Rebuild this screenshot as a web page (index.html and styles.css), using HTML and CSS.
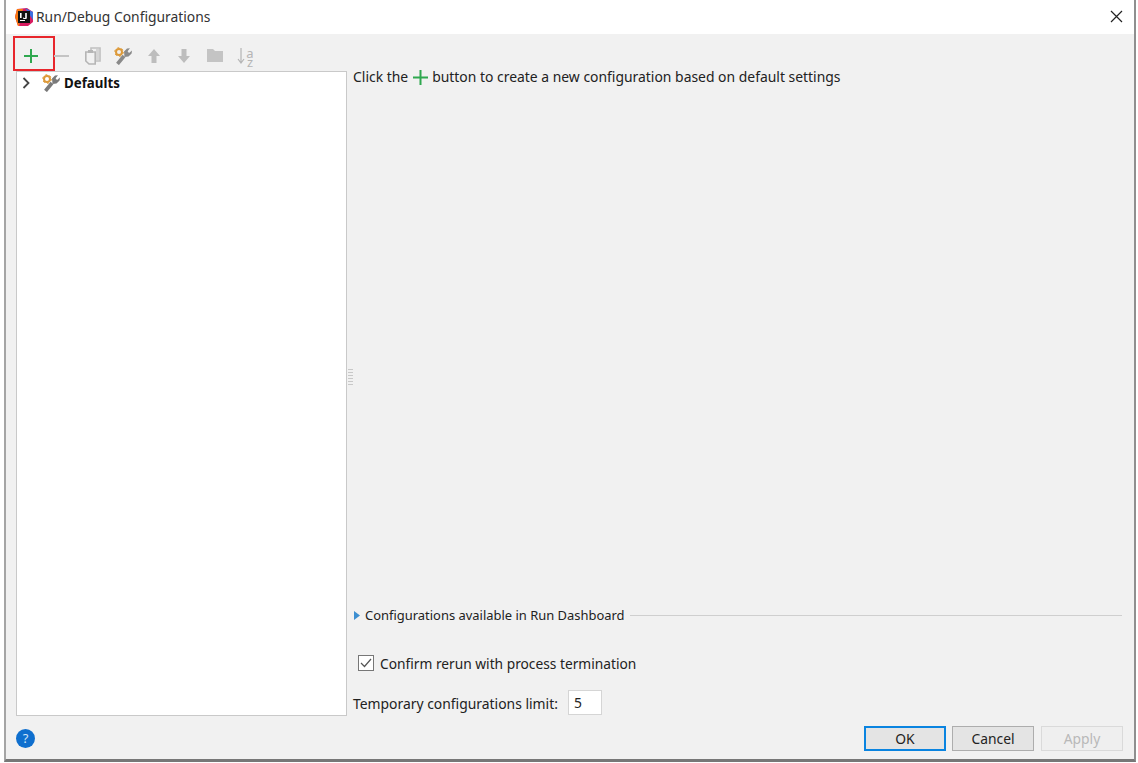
FILE: index.html
```html
<!DOCTYPE html>
<html lang="en">
<head>
<meta charset="utf-8">
<title>Run/Debug Configurations</title>
<link rel="stylesheet" href="styles.css">
</head>
<body>
<div class="window">
  <header class="titlebar">
    <svg class="app-icon" width="18" height="18" viewBox="0 0 18 18">
      <path d="M2 1 L12 0 L18 4 L18 14 L13 18 L3 18 L0 9 Z" fill="#d81b60"/>
      <path d="M0 9 L2 1 L8 1 L4 18 L3 18 Z" fill="#f97a12"/>
      <path d="M10 0 L18 4 L18 12 Z" fill="#3d6fe0"/>
      <rect x="3" y="3" width="12" height="12" fill="#111"/>
      <rect x="5" y="12" width="5" height="1" fill="#fff"/>
      <rect x="5" y="5" width="1.6" height="5" fill="#fff"/>
      <path d="M8 9.2L9 10H10.2V5H11.8V10.5L10.8 11H8.8L8 10.5Z" fill="#fff"/>
    </svg>
    <span class="title">Run/Debug Configurations</span>
    <svg class="close" width="13" height="13" viewBox="0 0 13 13"><path d="M1 1L12 12M12 1L1 12" stroke="#222" stroke-width="1.2" fill="none"/></svg>
  </header>
  <div class="content">
    <div class="left">
      <div class="toolbar">
        <div class="add-box">
          <svg width="16" height="16" viewBox="0 0 16 16"><path d="M8 1V15M1 8H15" stroke="#2fa84f" stroke-width="2" fill="none"/></svg>
        </div>
        <svg class="tool tool-minus" width="15" height="16" viewBox="0 0 15 16"><path d="M0 8H15" stroke="#c4c4c4" stroke-width="2" fill="none"/></svg>
        <svg class="tool tool-copy" width="17" height="18" viewBox="0 0 17 18"><path d="M7 3V1H16V14H12" fill="none" stroke="#c0c0c0" stroke-width="1.6"/><path d="M1.8 5H11.2V17H5L1.8 14Z" fill="#f1f1f1" stroke="#b5b5b5" stroke-width="1.6"/><rect x="4" y="3" width="5" height="3" fill="#b5b5b5"/><path d="M12 2H15V13H12Z" fill="#d5d5d5"/></svg>
        <svg class="tool tool-wrench" width="19" height="18" viewBox="0 0 19 18"><circle cx="5" cy="5" r="3" fill="none" stroke="#dd9a3a" stroke-width="2"/><circle cx="5" cy="5" r="4.3" fill="none" stroke="#dd9a3a" stroke-width="1" stroke-dasharray="2 2.5"/><path d="M3.5 17L10 9" stroke="#8a8a8a" stroke-width="3.6" fill="none"/><path d="M10 4.5L13 1.5L16 1.2L13.6 4.2L15 6L18 3.6L17.6 6.6L14.5 9.6L10.5 10Z" fill="#8a8a8a"/></svg>
        <svg class="tool tool-up" width="14" height="16" viewBox="0 0 14 16"><path d="M7 1L13 8H9.5V15H4.5V8H1Z" fill="#bdbdbd"/></svg>
        <svg class="tool tool-down" width="14" height="16" viewBox="0 0 14 16"><path d="M7 15L13 8H9.5V1H4.5V8H1Z" fill="#bdbdbd"/></svg>
        <svg class="tool tool-folder" width="16" height="13" viewBox="0 0 16 13"><path d="M0 0H6L8 2H16V13H0Z" fill="#c4c4c4"/></svg>
        <div class="tool tool-sort">
          <svg width="8" height="16" viewBox="0 0 8 16"><path d="M4 0V14M1 11L4 15L7 11" stroke="#b5b5b5" stroke-width="1.2" fill="none"/></svg>
          <span class="sort-letters">az</span>
        </div>
      </div>
      <div class="tree">
        <div class="tree-row">
          <svg class="chevron" width="8" height="12" viewBox="0 0 8 12"><path d="M1.5 1L6.5 6L1.5 11" stroke="#444" stroke-width="1.8" fill="none"/></svg>
          <svg class="defaults-icon" width="19" height="18" viewBox="0 0 19 18"><circle cx="5" cy="5" r="3" fill="none" stroke="#dd9a3a" stroke-width="2"/><circle cx="5" cy="5" r="4.3" fill="none" stroke="#dd9a3a" stroke-width="1" stroke-dasharray="2 2.5"/><path d="M3.5 17L10 9" stroke="#7a7a7a" stroke-width="3.6" fill="none"/><path d="M10 4.5L13 1.5L16 1.2L13.6 4.2L15 6L18 3.6L17.6 6.6L14.5 9.6L10.5 10Z" fill="#7a7a7a"/></svg>
          <span class="tree-label">Defaults</span>
        </div>
      </div>
    </div>
    <div class="splitter"><span class="grip"></span></div>
    <main class="right">
      <p class="hint"><span>Click the</span>
        <svg class="hint-plus" width="15" height="15" viewBox="0 0 15 15"><path d="M7.5 0V15M0 7.5H15" stroke="#2fa84f" stroke-width="2" fill="none"/></svg>
        <span>button to create a new configuration based on default settings</span></p>
      <div class="dash-row">
        <svg class="tri" width="6" height="9" viewBox="0 0 6 9"><path d="M0 0L6 4.5L0 9Z" fill="#3d8fd1"/></svg>
        <span>Configurations available in Run Dashboard</span>
        <span class="rule"></span>
      </div>
      <label class="confirm-row">
        <span class="check"><svg width="12" height="10" viewBox="0 0 12 10"><path d="M1 5L4.5 8.5L11 1" stroke="#555" stroke-width="1.2" fill="none"/></svg></span>
        <span>Confirm rerun with process termination</span>
      </label>
      <div class="limit-row">
        <span class="limit-label">Temporary configurations limit:</span>
        <span class="limit-input">5</span>
      </div>
    </main>
  </div>
  <footer class="footer">
    <span class="help">?</span>
    <div class="buttons">
      <button class="btn btn-ok">OK</button>
      <button class="btn">Cancel</button>
      <button class="btn btn-disabled">Apply</button>
    </div>
  </footer>
</div>
</body>
</html>
```
FILE: styles.css
```css
* { box-sizing: border-box; }
html, body { margin: 0; padding: 0; background: #fff; }
body {
  font-family: "Noto Sans", "Open Sans", sans-serif;
  font-size: 13.85px;
  color: #222;
  height: 763px;
  overflow: hidden;
}
.window {
  width: 1132px;
  height: 762px;
  margin-left: 4px;
  border-left: 2px solid #a5a5a5;
  border-right: 2px solid #8f8f8f;
  border-bottom: 3px solid #777;
  background: #f1f1f1;
  display: flex;
  flex-direction: column;
}
.titlebar {
  height: 34px;
  flex: none;
  background: #fff;
  display: flex;
  align-items: center;
  padding: 0 11px 0 9px;
}
.app-icon { margin-right: 3px; }
.title { color: #333; flex: 1; position: relative; top: -1px; }
.close { position: relative; top: -1px; }
.content { flex: 1; display: flex; min-height: 0; }
.left { width: 341px; flex: none; display: flex; flex-direction: column; }
.toolbar { height: 37px; flex: none; display: flex; align-items: center; padding-left: 7px; }
.add-box {
  width: 42px;
  height: 35px;
  margin-top: 1px;
  border: 2px solid #e8262c;
  display: flex;
  align-items: center;
  justify-content: center;
}
.add-box svg { position: relative; top: 3px; left: -3px; }
.tool { flex: none; position: relative; top: 3px; }
.tool-minus { margin-left: -1px; }
.tool-copy { margin-left: 15px; }
.tool-wrench { margin-left: 13px; }
.tool-up { margin-left: 14px; }
.tool-down { margin-left: 16px; }
.tool-folder { margin-left: 16px; }
.tool-sort { margin-left: 14px; display: flex; align-items: center; gap: 0; }
.sort-letters {
  writing-mode: vertical-rl;
  text-orientation: upright;
  font-size: 13px;
  letter-spacing: -9px;
  line-height: 9px;
  height: 17px;
  position: relative;
  top: -3px;
  color: #b5b5b5;
}
.tree {
  flex: none;
  height: 645px;
  margin-left: 10px;
  width: 331px;
  background: #fff;
  border: 1px solid #c9c9c9;
}
.tree-row { height: 22px; display: flex; align-items: center; padding-left: 5px; }
.chevron { flex: none; }
.defaults-icon { margin-left: 12px; flex: none; }
.tree-label { font-weight: 700; font-size: 13.3px; color: #111; margin-left: 3px; }
.splitter { width: 6px; flex: none; display: flex; align-items: center; justify-content: center; }
.grip {
  width: 5px;
  height: 16px;
  background: repeating-linear-gradient(to bottom, #c8c8c8 0, #c8c8c8 1px, transparent 1px, transparent 3px);
  position: relative;
  top: 2px;
}
.right { flex: 1; display: flex; flex-direction: column; padding-right: 12px; min-width: 0; }
.hint { margin: 33px 0 0; height: 20px; line-height: 20px; white-space: nowrap; display: flex; align-items: center; gap: 4px; font-size: 13.92px; }
.hint-plus { margin-left: 1px; flex: none; }
.dash-row { margin-top: 518px; height: 20px; display: flex; align-items: center; gap: 5px; font-size: 12.95px; }
.tri { margin-left: 1px; }
.rule { flex: 1; height: 1px; background: #cfcfcf; }
.confirm-row { margin-top: 28px; height: 20px; margin-left: 5px; display: flex; align-items: center; gap: 6px; font-size: 13.75px; }
.check {
  width: 16px; height: 16px; background: #fff;
  border: 1px solid #777;
  display: flex; align-items: center; justify-content: center;
}
.limit-row { margin-top: 17px; height: 25px; display: flex; align-items: center; gap: 10px; font-size: 13.9px; }
.limit-label { padding-top: 2px; }
.limit-input {
  width: 34px; height: 25px; background: #fff;
  border: 1px solid #d5d5d5;
  padding-left: 5px; line-height: 23px;
}
.footer { height: 43px; flex: none; display: flex; align-items: flex-start; justify-content: space-between; padding: 10px 11px 0 10px; }
.help {
  width: 19px; height: 19px; margin-top: 3px; border-radius: 50%;
  background: #0f6fce; color: #cfe4f8; font-size: 13px; line-height: 19px; text-align: center;
}
.buttons { display: flex; gap: 6px; }
.btn {
  width: 82px; height: 25px; padding: 0;
  font: inherit; color: #222;
  background: #e4e4e4; border: 1px solid #adadad;
}
.btn-ok { border: 2px solid #0a84e0; }
.btn-disabled { margin-left: 1px; background: #efefef; border-color: #dadada; color: #b8b8b8; }
```
